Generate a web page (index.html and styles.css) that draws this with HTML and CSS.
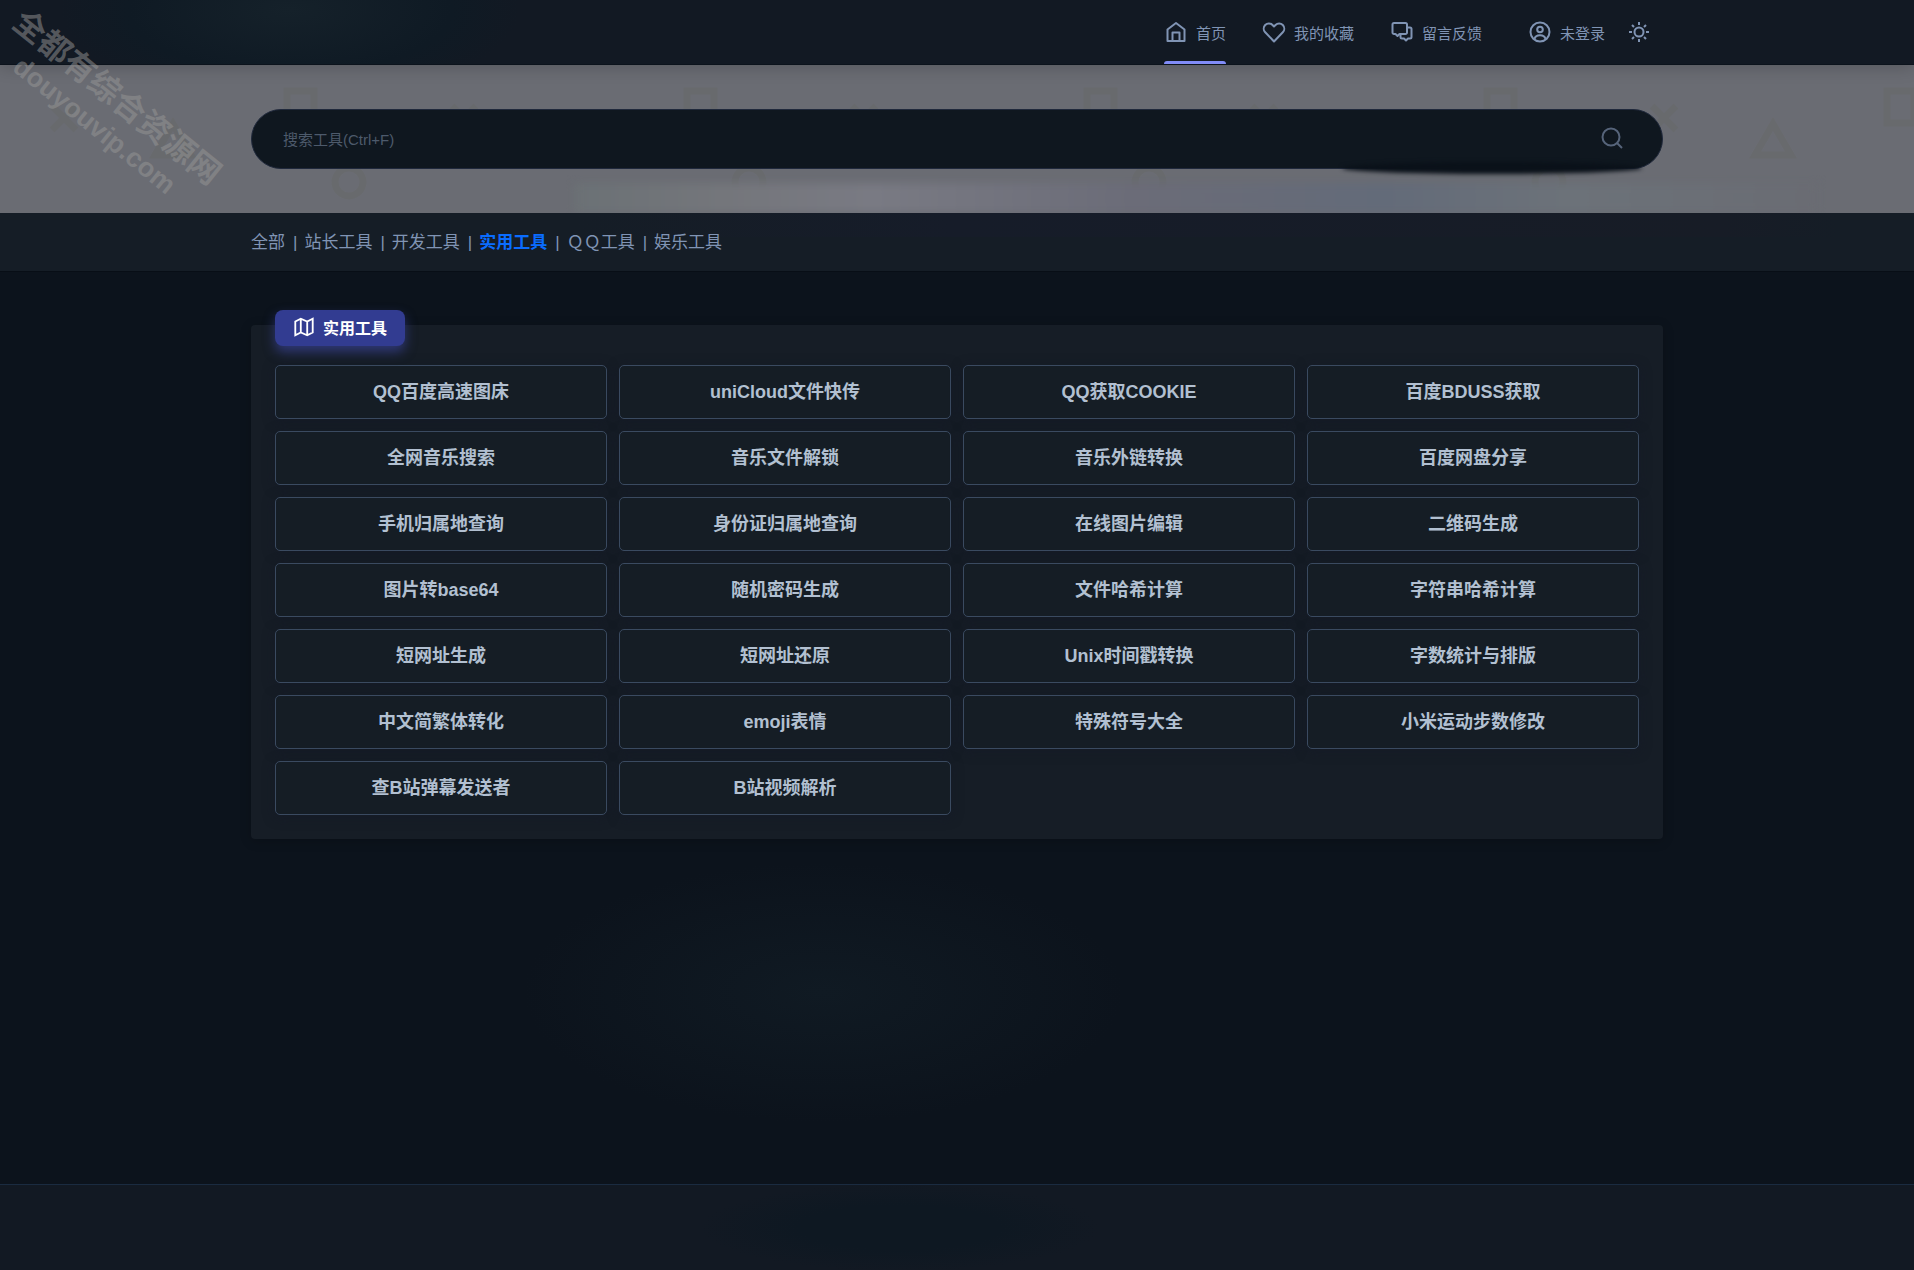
FILE: index.html
```html
<!DOCTYPE html>
<html lang="zh-CN">
<head>
<meta charset="utf-8">
<meta name="viewport" content="width=device-width, initial-scale=1">
<title>实用工具</title>
<link rel="stylesheet" href="styles.css">
</head>
<body>
<header class="header">
  <nav class="container nav">
    <a class="nav-link active" href="#"><svg class="icon" viewBox="0 0 24 24"><path d="M3.500 21V9.500L12 3l8.500 6.500V21z"/><path d="M8.500 21v-8.500h7V21"/></svg>首页</a>
    <a class="nav-link" href="#"><svg class="icon" viewBox="0 0 24 24"><path d="M12 21.500 3.200 12.300a5.300 5.300 0 0 1 0-7.300 5.100 5.100 0 0 1 7.300 0L12 6.500 13.500 5a5.100 5.100 0 0 1 7.300 0 5.300 5.300 0 0 1 0 7.300z"/></svg>我的收藏</a>
    <a class="nav-link" href="#"><svg class="icon" viewBox="0 0 24 24"><path d="M4 3h11.500a1.500 1.500 0 0 1 1.500 1.500v8a1.500 1.500 0 0 1-1.500 1.500H9.500l-2 2-2-2H4a1.500 1.500 0 0 1-1.500-1.500v-8A1.500 1.500 0 0 1 4 3z"/><path d="M17 7.500h3a1.500 1.500 0 0 1 1.500 1.500v8a1.500 1.500 0 0 1-1.500 1.500h-2l-2 2-2-2h-2a1.500 1.500 0 0 1-1.500-1.500v-3"/></svg>留言反馈</a>
    <div class="user">
      <a class="user-link" href="#"><svg class="icon" viewBox="0 0 24 24"><circle cx="12" cy="12" r="9.500"/><circle cx="12" cy="9.500" r="2.800"/><path d="M6.500 19c1-5 10-5 11 0"/></svg>未登录</a>
      <button class="theme" type="button" aria-label="切换主题"><svg class="icon" viewBox="0 0 24 24"><circle cx="12" cy="12" r="4.500"/><path d="M12 2v3M12 19v3M2 12h3M19 12h3M5 5l2 2M17 17l2 2M5 19l2-2M17 7l2-2"/></svg></button>
    </div>
  </nav>
</header>
<section class="hero">
  <svg class="shapes" aria-hidden="true"><defs><pattern id="shapes" width="400" height="148" patternUnits="userSpaceOnUse"><g fill="none" stroke="#686a6d" stroke-width="7"><path d="M287 26h27v32h-27zM52 41l24 24M76 41l-24 24M155 90l18-31 18 31z"/><circle cx="349" cy="117" r="14"/></g></pattern></defs><rect width="100%" height="100%" fill="url(#shapes)"/></svg>
  <form class="container search" role="search">
    <input class="search-input" type="text" aria-label="搜索工具" placeholder="搜索工具(Ctrl+F)">
    <button class="search-button" type="submit" aria-label="搜索"><svg class="icon" viewBox="0 0 24 24"><circle cx="11" cy="10" r="8.500"/><path d="m17 16 5 5"/></svg></button>
  </form>
</section>
<nav class="tabs">
  <ul class="container tab-list">
    <li><a href="#">全部</a></li>
    <li><a href="#">站长工具</a></li>
    <li><a href="#">开发工具</a></li>
    <li><a class="current" href="#">实用工具</a></li>
    <li><a href="#">&#65329;&#65329;工具</a></li>
    <li><a href="#">娱乐工具</a></li>
  </ul>
</nav>
<main class="main">
  <section class="container card">
    <h2 class="badge"><svg class="badge-icon" viewBox="0 0 24 24"><path d="m2.500 6 6-3 7 3 6-3v15l-6 3-7-3-6 3zM8.500 3v15M15.500 6v15"/></svg>实用工具</h2>
    <div class="grid">
      <a class="tool" href="#">QQ百度高速图床</a>
      <a class="tool" href="#">uniCloud文件快传</a>
      <a class="tool" href="#">QQ获取COOKIE</a>
      <a class="tool" href="#">百度BDUSS获取</a>
      <a class="tool" href="#">全网音乐搜索</a>
      <a class="tool" href="#">音乐文件解锁</a>
      <a class="tool" href="#">音乐外链转换</a>
      <a class="tool" href="#">百度网盘分享</a>
      <a class="tool" href="#">手机归属地查询</a>
      <a class="tool" href="#">身份证归属地查询</a>
      <a class="tool" href="#">在线图片编辑</a>
      <a class="tool" href="#">二维码生成</a>
      <a class="tool" href="#">图片转base64</a>
      <a class="tool" href="#">随机密码生成</a>
      <a class="tool" href="#">文件哈希计算</a>
      <a class="tool" href="#">字符串哈希计算</a>
      <a class="tool" href="#">短网址生成</a>
      <a class="tool" href="#">短网址还原</a>
      <a class="tool" href="#">Unix时间戳转换</a>
      <a class="tool" href="#">字数统计与排版</a>
      <a class="tool" href="#">中文简繁体转化</a>
      <a class="tool" href="#">emoji表情</a>
      <a class="tool" href="#">特殊符号大全</a>
      <a class="tool" href="#">小米运动步数修改</a>
      <a class="tool" href="#">查B站弹幕发送者</a>
      <a class="tool" href="#">B站视频解析</a>
    </div>
  </section>
</main>
<footer class="footer"></footer>
<div class="watermark"><span class="watermark-name">全都有综合资源网</span><span class="watermark-site">douyouvip.com</span></div>
</body>
</html>
```

FILE: styles.css
```css
* { box-sizing: border-box; }

body {
  display: flex;
  flex-direction: column;
  min-height: 100vh;
  margin: 0;
  background: #0c131c;
  color: #8094b4;
  font-family: "Liberation Sans", "Noto Sans CJK SC", sans-serif;
  font-size: 15px;
  overflow-x: hidden;
}

a { color: inherit; text-decoration: none; }

button { padding: 0; border: 0; background: none; color: inherit; }

.container { width: calc(100% - 32px); max-width: 1412px; margin: 0 auto; }

.icon {
  display: block;
  width: 24px;
  height: 24px;
  fill: none;
  stroke: currentColor;
  stroke-width: 2;
  stroke-linejoin: round;
}

.header {
  position: relative;
  z-index: 1;
  border-bottom: 1px solid #0c131c;
  background: radial-gradient(ellipse 230px 90px at 290px 10px, #15212a 0%, #0f1a24 70%, transparent 100%) #121923;
  box-shadow: 0 2px 16px rgba(0, 0, 0, .2);
}

.nav { display: flex; justify-content: flex-end; gap: 36px; height: 64px; padding-right: 12px; }

.nav-link, .user-link { display: flex; align-items: center; gap: 8px; }

.nav-link.active { position: relative; }

.nav-link.active::after {
  content: "";
  position: absolute;
  right: 0;
  bottom: 0;
  left: 0;
  height: 3px;
  border-radius: 3px 3px 0 0;
  background: #818cf8;
}

.user { display: flex; align-items: center; gap: 22px; margin-left: 10px; }

.hero { position: relative; padding: 44px 0; background: #6a6c73; }

/* soft light band along the bottom edge of the banner */
.hero::after {
  content: "";
  position: absolute;
  bottom: 0;
  left: 30%;
  width: 65%;
  height: 30px;
  background: linear-gradient(90deg, #6b7175, #74767b 12%, #797a83 24%, #6b6c78 45%, #636b79 65%, #6c7279 80%, #6a6c73);
  filter: blur(4px);
  clip-path: inset(-8px -8px 0 -8px);
}

.shapes { position: absolute; top: 0; left: 0; width: 100%; height: 100%; }

.search {
  position: relative;
  z-index: 1;
  display: flex;
  align-items: center;
  height: 60px;
  padding: 0 38px 0 31px;
  border: 1px solid #20293c;
  border-radius: 30px;
  background: #0f171f;
}

.search::after {
  content: "";
  position: absolute;
  right: 20px;
  bottom: -6px;
  width: 300px;
  height: 12px;
  border-radius: 50%;
  background: #0a1119;
  filter: blur(2px);
}

.search-input {
  flex: 1;
  min-width: 0;
  padding: 0;
  border: 0;
  outline: 0;
  background: none;
  color: #8094b4;
  font: inherit;
}

.search-input::placeholder { color: #4d5a6b; opacity: 1; }

.search-button { color: #56647a; }

.tabs {
  border-bottom: 1px solid #080e16;
  background: linear-gradient(90deg, transparent 30%, #161c29 50%, #171c26 90%, transparent 96%) top / 100% 24px no-repeat #151d26;
}

.tab-list {
  display: flex;
  align-items: center;
  height: 58px;
  padding: 0 0 4px;
  list-style: none;
  font-size: 17px;
}

.tab-list li + li::before { content: "|"; padding: 0 7px 0 8px; }

.current { color: #0a6cff; font-weight: 700; }

.main {
  flex: 1;
  padding: 53px 0 40px;
  background: radial-gradient(ellipse 300px 130px at 43% 79%, #101a23, transparent);
}

.card {
  padding: 0 24px 24px;
  border-radius: 4px;
  background: #161d26;
  box-shadow: 0 2px 12px rgba(0, 0, 0, .2);
}

.badge {
  display: flex;
  align-items: center;
  gap: 8px;
  width: max-content;
  height: 36px;
  margin: 0 0 4px;
  padding: 0 18px 2px;
  border-radius: 8px;
  background: #323c91;
  box-shadow: 0 6px 12px rgba(63, 73, 170, .6);
  color: #fff;
  font-size: 16px;
  transform: translateY(-15px);
}

.badge-icon { width: 22px; height: 22px; fill: none; stroke: currentColor; stroke-width: 2; }

.grid { display: grid; grid-template-columns: repeat(4, 1fr); gap: 12px; }

.tool {
  display: flex;
  align-items: center;
  justify-content: center;
  height: 54px;
  padding-bottom: 4px;
  border: 1px solid #3a4a60;
  border-radius: 5px;
  background: #151d25;
  box-shadow: 0 2px 12px rgba(20, 24, 40, .5);
  color: #b2c0d1;
  font-size: 18px;
  font-weight: 700;
}

.footer {
  height: 86px;
  border-top: 1px solid #1a2b40;
  background: radial-gradient(ellipse 200px 44px at 47% 50%, #0e1822 50%, transparent) #121923;
}

.watermark {
  position: absolute;
  z-index: 2;
  top: 3px;
  left: 29px;
  display: flex;
  flex-direction: column;
  align-items: center;
  color: rgba(150, 150, 150, .5);
  font-weight: 700;
  line-height: 36px;
  white-space: nowrap;
  transform: rotate(39deg);
  transform-origin: 0 0;
  pointer-events: none;
}

.watermark-name { font-size: 32px; }

.watermark-site { font-size: 27px; }
```
